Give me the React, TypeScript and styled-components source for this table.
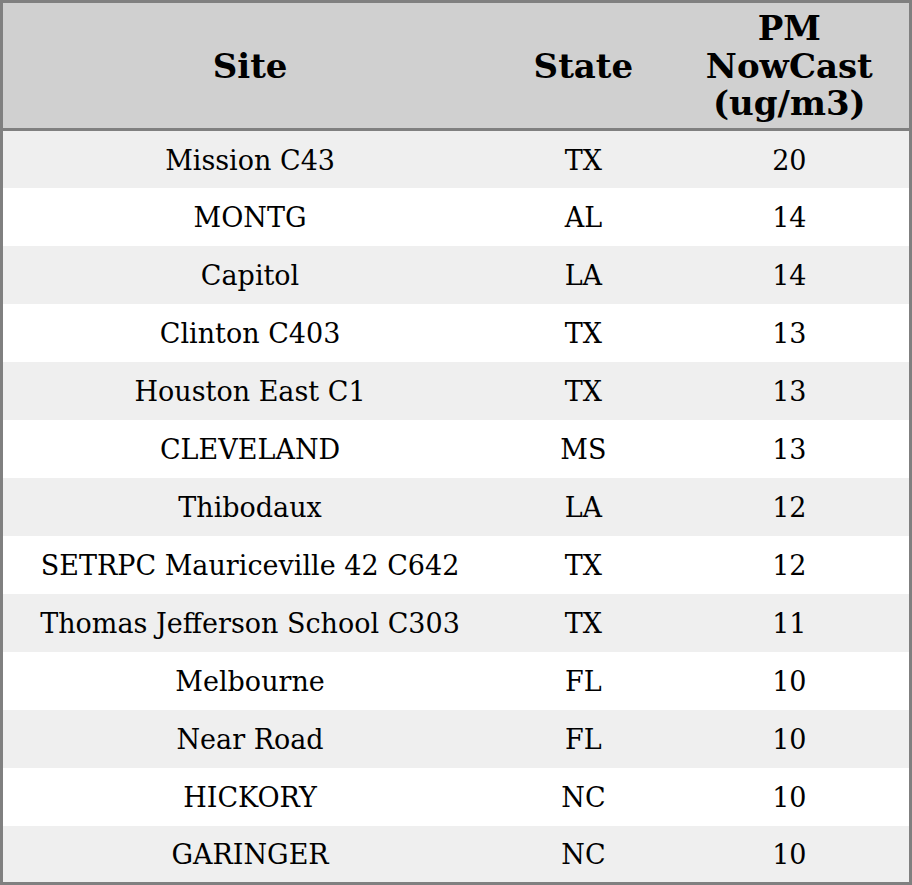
import * as React from 'react'
import styled, {createGlobalStyle} from 'styled-components'

const GlobalStyle = createGlobalStyle`
  html, body {
    margin: 0;
    padding: 0;
    background: #fff;
  }
  body {
    font-family: "DejaVu Serif", serif;
    color: #000;
  }
`

type Reading = {site: string; state: string; pm: number}

const readings: Reading[] = [
  {site: 'Mission C43', state: 'TX', pm: 20},
  {site: 'MONTG', state: 'AL', pm: 14},
  {site: 'Capitol', state: 'LA', pm: 14},
  {site: 'Clinton C403', state: 'TX', pm: 13},
  {site: 'Houston East C1', state: 'TX', pm: 13},
  {site: 'CLEVELAND', state: 'MS', pm: 13},
  {site: 'Thibodaux', state: 'LA', pm: 12},
  {site: 'SETRPC Mauriceville 42 C642', state: 'TX', pm: 12},
  {site: 'Thomas Jefferson School C303', state: 'TX', pm: 11},
  {site: 'Melbourne', state: 'FL', pm: 10},
  {site: 'Near Road', state: 'FL', pm: 10},
  {site: 'HICKORY', state: 'NC', pm: 10},
  {site: 'GARINGER', state: 'NC', pm: 10},
]

const Table = styled.table`
  width: 912px;
  height: 885px;
  border-collapse: collapse;
  border: 3px solid #808080;
  table-layout: fixed;
`

const Col = styled.col<{$width: number}>`
  width: ${(p) => p.$width}px;
`

const HeadRow = styled.tr`
  height: 128px;
  background: #d0d0d0;
  border-bottom: 3px solid #808080;
`

const HeadCell = styled.th`
  padding: 2px 0 0;
  font-size: 34px;
  font-weight: bold;
  line-height: 37.5px;
  text-align: center;
  vertical-align: middle;
`

const Row = styled.tr<{$striped: boolean}>`
  height: 57px;
  background: ${(p) => (p.$striped ? '#efefef' : '#fff')};
`

const Cell = styled.td`
  padding: 2px 0 0;
  font-size: 27px;
  text-align: center;
  vertical-align: middle;
  white-space: nowrap;
`

export default function App() {
  return (
    <>
      <GlobalStyle />
      <Table>
        <colgroup>
          <Col $width={494} />
          <Col $width={172} />
          <Col $width={240} />
        </colgroup>
        <thead>
          <HeadRow>
            <HeadCell>Site</HeadCell>
            <HeadCell>State</HeadCell>
            <HeadCell>
              PM
              <br />
              NowCast
              <br />
              (ug/m3)
            </HeadCell>
          </HeadRow>
        </thead>
        <tbody>
          {readings.map((r, i) => (
            <Row key={r.site} $striped={i % 2 === 0}>
              <Cell>{r.site}</Cell>
              <Cell>{r.state}</Cell>
              <Cell>{r.pm}</Cell>
            </Row>
          ))}
        </tbody>
      </Table>
    </>
  )
}
